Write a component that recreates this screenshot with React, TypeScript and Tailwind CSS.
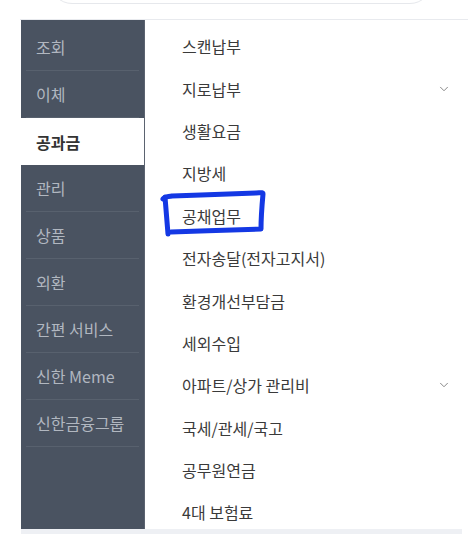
import { ChevronDown } from 'lucide-react';

const sideItems = ['조회', '이체', '공과금', '관리', '상품', '외환', '간편 서비스', '신한 Meme', '신한금융그룹'];

const subItems: { label: string; more?: boolean }[] = [
    { label: '스캔납부' },
    { label: '지로납부', more: true },
    { label: '생활요금' },
    { label: '지방세' },
    { label: '공채업무' },
    { label: '전자송달(전자고지서)' },
    { label: '환경개선부담금' },
    { label: '세외수입' },
    { label: '아파트/상가 관리비', more: true },
    { label: '국세/관세/국고' },
    { label: '공무원연금' },
    { label: '4대 보험료' },
];

const font = { fontFamily: '"Noto Sans CJK KR", "Noto Sans", sans-serif' };

function Marker() {
    // hand-drawn highlight round "공채업무"
    return (
        <svg className="pointer-events-none absolute left-0 top-0" width="468" height="542" viewBox="0 0 468 542">
            <path
                d="M163 199 C165 196 168 197 172 196 C200 195 232 194 256 193 C260 193 263 192 263 194 C262 205 261 217 261 229 C235 230 200 231 171 232 M165 197 C166 209 167 221 168 234"
                fill="none"
                stroke="#1438e4"
                strokeWidth="5"
                strokeLinecap="round"
                strokeLinejoin="round"
            />
        </svg>
    );
}

export default function App() {
    return (
        <div className="relative h-[542px] w-[468px] overflow-hidden bg-white" style={font}>
            {/* bottom of the search box above */}
            <div className="h-[19px] overflow-hidden">
                <div className="mx-[50px] mr-[36px] -mt-[30px] h-[34px] rounded-b-[22px] border border-[#e6e8ec] bg-white" />
            </div>

            <div className="ml-[20px] border-t border-[#e8eaee]">
                <div className="ml-[1px] mr-[6px] flex h-[509px]">
                    <nav className="w-[124px] shrink-0 border-r border-[#5b6370] bg-[#4a5361] pt-[4px]">
                        {sideItems.map((item) => {
                            const active = item === '공과금';
                            return (
                                <div key={item} className={`h-[47px] px-[5px] ${active ? 'bg-white' : ''}`}>
                                    <div
                                        className={`flex h-full items-center pl-[10px] text-[16px] ${
                                            active
                                                ? 'font-bold text-[#333]'
                                                : 'border-b border-[#58616e] text-[#b1b7c0]'
                                        }`}
                                    >
                                        {item}
                                    </div>
                                </div>
                            );
                        })}
                    </nav>

                    <ul className="flex-1 pl-[37px] pr-[11px] pt-[5px]">
                        {subItems.map((item) => (
                            <li key={item.label} className="flex h-[42.4px] items-center justify-between text-[16px] text-[#3a3a3a]">
                                <span>{item.label}</span>
                                {item.more && <ChevronDown size={14} strokeWidth={1.5} className="text-[#777]" />}
                            </li>
                        ))}
                    </ul>
                </div>
                <div className="ml-[1px] mr-[6px] h-[5px] bg-[#eef0f4]" />
            </div>

            <Marker />
        </div>
    );
}
